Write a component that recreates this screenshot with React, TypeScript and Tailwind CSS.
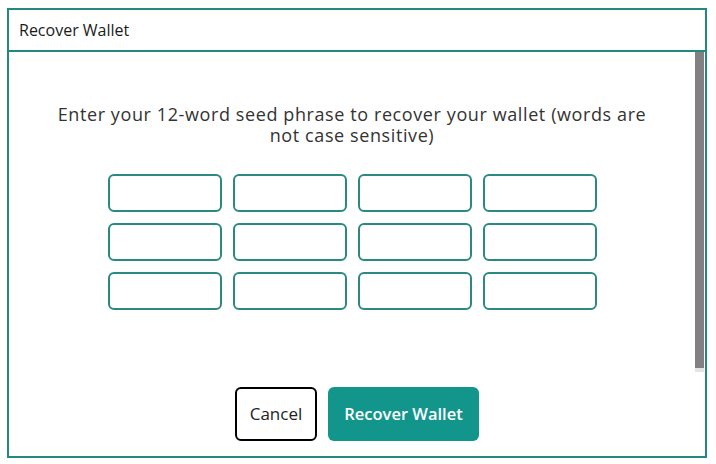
const WORD_COUNT = 12;

const RecoverWalletModal = () => {
    const slots = Array.from({ length: WORD_COUNT }, (_, i) => i);

    return (
        <div className="w-[716px] h-[464px] bg-white pt-[8px] pl-[7px] font-['Open_Sans',sans-serif]">
            <div className="w-[700px] h-[450px] border-2 border-[#23887f] flex flex-col">
                {/* Title bar */}
                <div className="h-[42px] shrink-0 flex items-center px-[10px] border-b-2 border-[#23887f]">
                    <h1 className="text-[16px] text-[#1b1b1b]">Recover Wallet</h1>
                </div>

                <div className="flex h-[320px] shrink-0">
                    <div className="flex-1 flex flex-col items-center pt-[52px]">
                        <p className="text-[18px] leading-[21px] text-[#333] text-center tracking-[0.6px]">
                            Enter your 12-word seed phrase to recover your wallet (words are
                            <br />
                            not case sensitive)
                        </p>
                        <div className="grid grid-cols-4 gap-[11px] mt-[28px]">
                            {slots.map((i) => (
                                <input
                                    key={i}
                                    type="text"
                                    aria-label={`Word ${i + 1}`}
                                    className="w-[114px] h-[38px] rounded-[6px] border-2 border-[#2a8a82] outline-none px-2 text-[14px]"
                                />
                            ))}
                        </div>
                    </div>
                    <div className="w-[9px] mr-px flex flex-col">
                        <div className="h-[316px] bg-[#838083]" />
                        <div className="h-[4px] bg-[#e4e4e4]" />
                    </div>
                </div>

                {/* Actions */}
                <div className="flex-1 flex items-start justify-center gap-[11px] pt-[15px]">
                    <button className="w-[82px] h-[54px] rounded-[6px] border-2 border-black bg-white text-[17px] text-[#222]">
                        Cancel
                    </button>
                    <button className="w-[151px] h-[54px] rounded-[6px] bg-[#12968b] text-white text-[16.5px] font-semibold">
                        Recover Wallet
                    </button>
                </div>
            </div>
        </div>
    );
};

export default function App() {
    return <RecoverWalletModal />;
}
